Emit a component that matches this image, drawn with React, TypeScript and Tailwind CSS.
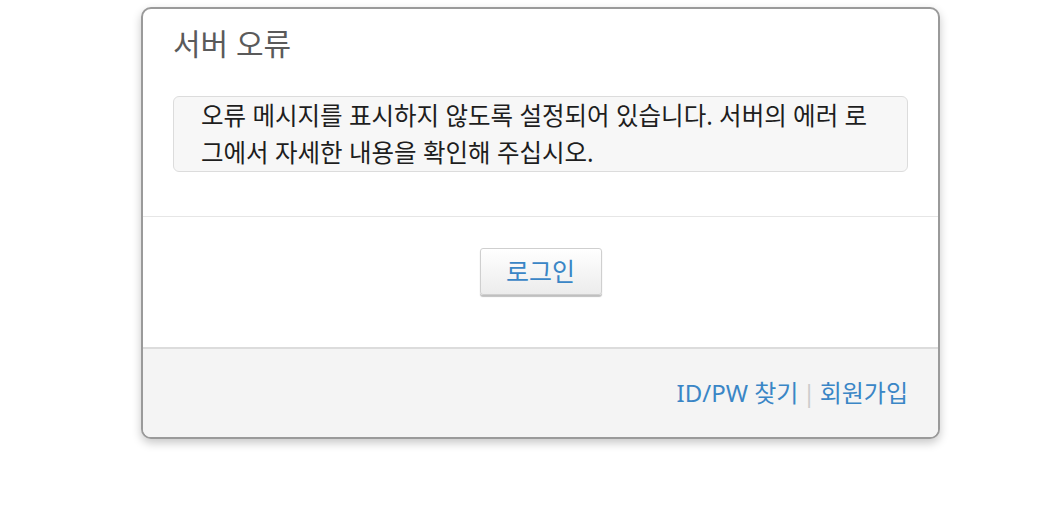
export default function App() {
  return (
    <div className="min-h-[520px] bg-white pt-[7px] font-['Noto_Sans','Noto_Sans_CJK_KR',sans-serif]">
      <div className="ml-[141px] w-[799px] overflow-hidden rounded-[10px] border-2 border-[#9a9a9a] bg-white shadow-[0_4px_10px_rgba(0,0,0,0.22)]">
        <div className="px-[30px] pb-[44px] pt-[15px]">
          <h1 className="text-[30px] font-normal leading-[40px] text-[#5a5a5a]">서버 오류</h1>
          <div className="mt-[32px] rounded-[6px] border border-[#dcdcdc] bg-[#f7f7f7] pl-[27px] pr-[30px] text-[24.5px] leading-[37px] text-[#1e1e1e]">
            오류 메시지를 표시하지 않도록 설정되어 있습니다. 서버의 에러 로그에서 자세한 내용을 확인해 주십시오.
          </div>
        </div>
        <div className="flex justify-center border-t border-[#e6e6e6] pb-[52px] pt-[31px]">
          <button className="h-[47px] w-[122px] rounded-[3px] border border-[#cfcfcf] bg-gradient-to-b from-white to-[#ececec] text-[25px] text-[#3a86c6] shadow-[0_2px_1px_rgba(0,0,0,0.25)]">
            로그인
          </button>
        </div>
        <div className="flex h-[90px] items-center justify-end border-t-2 border-[#dcdcdc] bg-[#f4f4f4] px-[30px] text-[24px] text-[#3a86c6]">
          <span>ID/PW 찾기</span>
          <span className="mx-[4px] text-[#cccccc]">|</span>
          <span>회원가입</span>
        </div>
      </div>
    </div>
  );
}
